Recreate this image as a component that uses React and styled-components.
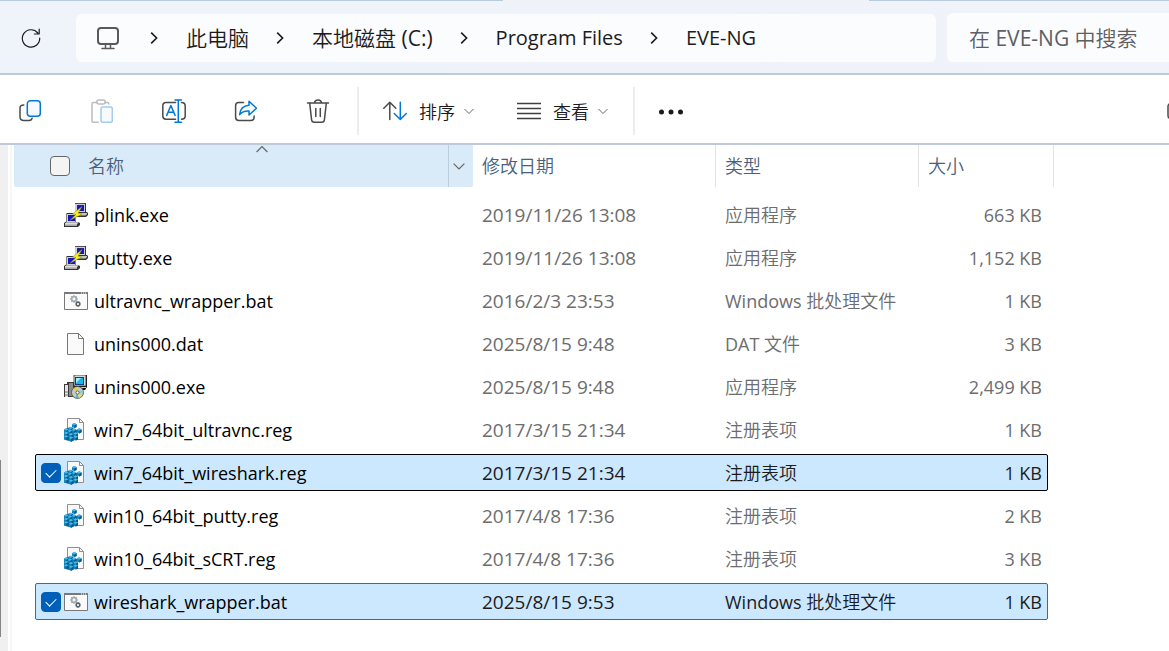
import React from 'react';
import styled, { createGlobalStyle, css } from 'styled-components';

const GlobalStyle = createGlobalStyle`
  * {
    box-sizing: border-box;
  }

  body {
    margin: 0;
    background: #fff;
    color: #1b1b1b;
    font-family: "Open Sans", "Noto Sans CJK SC DemiLight", "Noto Sans CJK SC", sans-serif;
    font-size: 18px;
  }

  button,
  input {
    font: inherit;
    color: inherit;
  }
`;

const Window = styled.div`
  display: flex;
  flex-direction: column;
  min-height: 100vh;
  overflow: hidden;
`;

const TabEdge = styled.div`
  display: flex;
  justify-content: space-between;
  height: 1px;
  background: #eff4f9;
`;

const EdgeLine = styled.div`
  width: ${({ $width }) => $width};
  background: #b9cadb;
`;

const NavBar = styled.header`
  display: flex;
  align-items: flex-end;
  padding: 12px 0 11px 7px;
  background: linear-gradient(90deg, #eef4f9, #f0f3f9);
  border-bottom: 2px solid #bccadb;
`;

const IconButton = styled.button`
  display: flex;
  align-items: center;
  justify-content: center;
  flex: none;
  width: 48px;
  height: 48px;
  padding: 0;
  border: 0;
  background: none;
`;

const AddressBar = styled.nav`
  display: flex;
  align-items: center;
  flex: 1;
  height: 48px;
  margin: 0 11px 0 21px;
  padding-left: 20px;
  border-radius: 6px;
  background: #fbfcfe;
`;

const Crumbs = styled.ol`
  display: flex;
  align-items: center;
  margin: 0 0 0 3px;
  padding: 0;
  list-style: none;
`;

const Crumb = styled.li`
  display: flex;
  align-items: center;
  gap: 28px;
  margin-left: 27px;
  font-size: ${({ $latin }) => ($latin ? 20 : 21)}px;

  a {
    color: #1b1b1b;
    line-height: 28px;
    text-decoration: none;
    white-space: nowrap;
  }
`;

const SearchBox = styled.input`
  width: 222px;
  height: 49px;
  padding: 0 0 0 22px;
  border: 0;
  border-radius: 6px 0 0 6px;
  background: #fbfcfe;
  font-size: 21px;

  &::placeholder {
    color: #5c5f63;
    opacity: 1;
  }
`;

const CommandBar = styled.div`
  display: flex;
  align-items: center;
  height: 70px;
  padding: 4px 0 0 6px;
  border-bottom: 2px solid #bfc9da;
`;

const IconGroup = styled.div`
  display: flex;
  gap: 24px;
`;

const Divider = styled.div`
  width: 2px;
  height: 48px;
  margin: 0 12px 0 ${({ $before }) => $before}px;
  background: #ededed;
`;

const MenuGroup = styled.div`
  display: flex;
  gap: 19px;
`;

const MenuButton = styled.button`
  display: flex;
  align-items: center;
  height: 48px;
  padding: 0 12px;
  border: 0;
  background: none;
  font-weight: 350;
  white-space: nowrap;

  span {
    margin: 0 9px 0 12px;
  }
`;

const PaneButton = styled(IconButton)`
  width: 24px;
  margin: 0 -22px 0 auto;
`;

const Body = styled.main`
  display: flex;
  flex: 1;
`;

const ScrollTrack = styled.div`
  flex: none;
  width: 8px;
  background: #f0f0f0;
`;

const ScrollThumb = styled.div`
  width: 1px;
  height: 177px;
  margin-top: 315px;
  background: #858585;
`;

const Splitter = styled.div`
  flex: none;
  width: 2px;
  margin: 0 2px;
  background: #f7f7f7;
`;

const FileTable = styled.table`
  display: block;
  flex: 1;
`;

const TableHead = styled.thead`
  display: block;
`;

const columns = css`
  display: grid;
  grid-template-columns: ${({ $first, $last }) => `${$first}px 243px 203px ${$last}px`};
`;

const HeadRow = styled.tr`
  ${columns}
  height: 42px;
`;

const HeadCell = styled.th`
  position: relative;
  display: flex;
  align-items: center;
  padding: 0 0 0 9px;
  border-right: 1px solid #e3e3e3;
  color: #4b607c;
  font-weight: 350;
  text-align: left;

  ${({ $active }) => $active && css`
    padding-left: 36px;
    border-right: 0;
    border-radius: 0 0 2px 2px;
    background: #d9ebf9;
  `}
`;

const HeadLabel = styled.span`
  flex: 1;
  padding-bottom: 3px;
  margin-left: ${({ $indent }) => $indent || 0}px;
`;

const SortMark = styled.span`
  position: absolute;
  top: -2px;
  left: 50%;
  display: flex;
  width: 12px;
  margin-left: 12px;
`;

const FilterButton = styled.button`
  display: flex;
  align-items: center;
  justify-content: center;
  width: 25px;
  height: 42px;
  padding: 0 4px 0 0;
  border: 0;
  border-left: 1px solid #b9cfe0;
  background: none;
`;

const Checkbox = styled.input.attrs({ type: 'checkbox' })`
  appearance: none;
  display: flex;
  justify-content: center;
  flex: none;
  width: 20px;
  height: 20px;
  margin: 0;
  border: 1px solid #666;
  border-radius: 4px;
  background: #f4f4f4;

  ${({ $row }) => $row && css`
    opacity: 0;
  `}

  &:checked {
    opacity: 1;
    border-color: #005fb8;
    background: #005fb8;
  }

  &:checked::after {
    content: "";
    width: 9px;
    height: 5px;
    margin-top: 5px;
    border: solid #fff;
    border-width: 0 0 1px 1px;
    transform: rotate(-45deg);
  }
`;

const TableBody = styled.tbody`
  display: flex;
  flex-direction: column;
  gap: 6px;
  padding: 9px 0 31px 21px;
`;

const FileRow = styled.tr`
  ${columns}
  width: 1013px;
  height: 37px;
  border: 1px solid transparent;
  border-radius: 2px;
  color: #6d6d6d;

  ${({ $selected, $focused }) => $selected && css`
    border-color: ${$focused ? '#000' : '#0a78d4'};
    background: #cce8ff;
    color: #1b1b1b;
  `}
`;

const Cell = styled.td`
  display: flex;
  align-items: center;
  justify-content: ${({ $end }) => ($end ? 'flex-end' : 'flex-start')};
  padding: ${({ $end }) => ($end ? '0 5px 0 0' : '0 0 0 9px')};
  font-size: ${({ $date }) => ($date ? 19 : 18)}px;
  line-height: 24px;
  white-space: nowrap;
`;

const NameCell = styled(Cell)`
  gap: 3px;
  padding: 0 0 0 5px;
  color: #000;

  label {
    display: flex;
    align-items: center;
    gap: 6px;
  }
`;

const Line = ({ size = 24, w = 1.5, color = '#4a4a4a', children, ...rest }) => (
  <svg
    width={size}
    height={size}
    viewBox={`0 0 ${size} ${size}`}
    fill="none"
    stroke={color}
    strokeWidth={w}
    strokeLinecap="round"
    strokeLinejoin="round"
    aria-hidden="true"
    {...rest}
  >
    {children}
  </svg>
);

const RefreshIcon = () => (
  <Line color="#1b1b1b" w={1.2}>
    <path d="M18.800 7A8.700 8.700 0 1 0 20.700 12M20.200 3.200v4.800h-4.800" />
  </Line>
);

const ComputerIcon = () => (
  <Line color="#5a5a5a" w={2}>
    <rect x="2" y="2" width="20" height="16" rx="3" />
    <path d="M9.500 18.500v3M14.500 18.500v3M6 22.500h12" strokeWidth="1.500" />
  </Line>
);

const CrumbArrow = () => (
  <svg width="8" height="14" viewBox="0 0 8 14" fill="none" stroke="#1b1b1b" strokeWidth="1.600" aria-hidden="true">
    <path d="M1.200 1.600 6.600 7l-5.400 5.400" />
  </svg>
);

const CopyIcon = () => (
  <Line>
    <path d="M5.800 6C3 6 2 7.300 2 9v8.500C2 20.200 3.600 21.500 5.800 21.500H11c1.500 0 2.800-.8 3.100-2.300" />
    <rect x="9.300" y="1.800" width="13" height="15.400" rx="3" stroke="#0078d4" fill="#f5faff" />
  </Line>
);

const PasteIcon = () => (
  <Line color="#bdbdbd">
    <path d="M7 3.500H3.500C2.500 3.500 2 4 2 5v17c0 .9.500 1.300 1.300 1.300H8M15 3.500h2.500c.8 0 1.300.5 1.300 1.500" />
    <rect x="6.800" y="1" width="8.400" height="4" rx="2" />
    <rect x="11" y="8" width="11.300" height="15.300" rx="1.800" stroke="#a3cbed" fill="#f7fbff" />
  </Line>
);

const RenameIcon = () => (
  <Line>
    <path d="M13.500 3.600H4C1.700 3.600 .8 5 .8 7v10c0 2 .9 3.200 3.200 3.200h9.500M19.500 3.600c2.500 0 3.700 1.200 3.700 3.400v10c0 2-1.200 3.200-3.700 3.200" />
    <path d="M13 .9h6.500M13 23.300h6.500M16.300 .9v22.400" stroke="#0078d4" />
    <path d="m4.700 16.400 4.200-9.900 4.200 9.900M6 13.300h5.800" stroke="#0078d4" />
  </Line>
);

const ShareIcon = () => (
  <Line>
    <path d="M9.500 3.500H4.700C2.500 3.500 1.600 4.800 1.600 6.700v11.600c0 2.100 1.100 3.200 3.200 3.200h12c2.200 0 3.300-1.100 3.300-3.200v-1.200" />
    <path d="M15 2.300 22.500 9.200 15 16v-4c-4.300-.2-7 .8-9.400 3.600.5-5.400 3.800-9 9.400-9.400z" stroke="#0078d4" fill="#f5faff" />
  </Line>
);

const DeleteIcon = () => (
  <Line>
    <path d="M1.500 4h21M8.500 3.700c.3-1.800 1.500-2.800 3.500-2.800s3.200 1 3.500 2.800M3.700 4.200l1.900 16.600c.2 1.600 1 2.400 2.600 2.400h7.600c1.600 0 2.400-.8 2.600-2.400L20.300 4.200M9.800 9.500v8M14.300 9.500v8" />
  </Line>
);

const SortIcon = () => (
  <Line>
    <path d="M6.800 20.500V3.300M.8 9.300l6-6 6 6" />
    <path d="M17.300 3.300v17.200M11.300 14.500l6 6 6-6" stroke="#0078d4" />
  </Line>
);

const ListIcon = () => (
  <Line w={1.4} color="#3f3f3f" strokeLinecap="butt">
    <path d="M0 4.500h24M0 9.500h24M0 14.500h24M0 19.500h24" />
  </Line>
);

const DotsIcon = () => (
  <svg width="24" height="24" viewBox="0 0 24 24" fill="#1b1b1b" aria-hidden="true">
    <circle cx="2.500" cy="13" r="2.500" />
    <circle cx="12" cy="13" r="2.500" />
    <circle cx="21.500" cy="13" r="2.500" />
  </svg>
);

const PaneIcon = () => (
  <Line>
    <rect x="1" y="4.500" width="22" height="15" rx="3" />
    <path d="M15 5v14" />
  </Line>
);

const Chevron = ({ size = 10, up, color = '#666' }) => (
  <svg width={size} height={size} viewBox="0 0 10 10" fill="none" stroke={color} aria-hidden="true">
    <path d={up ? 'M.5 7.500 5 3l4.500 4.500' : 'M.5 3 5 7.500 9.500 3'} />
  </svg>
);

// Two linked terminals
const PuttyIcon = () => (
  <svg width="24" height="24" viewBox="0 0 24 24" aria-hidden="true">
    <path d="M11 0h11v9h1l1 1v2l-2 2H12v-3h-1z" fill="#333" />
    <path d="M11 .8h10V9H11z" fill="#d0d0d0" />
    <path d="M13 2h7v6h-7z" fill="#333" />
    <path d="M13.500 2.500H20V8h-6.500z" fill="#1414c4" />
    <path d="M12.500 10H23v1l-1.500 1.500h-9z" fill="#c4c4c4" />
    <path d="M3 10h9v9h2l2 1v2l-2 2H0v-4l2-1.500V11z" fill="#333" />
    <path d="M2.500 11h9v8h-9z" fill="#d0d0d0" />
    <path d="M4 12h7v6H4z" fill="#1414c4" />
    <path d="M1 20.300l1.500-1H14.500l-1.500 2v1.500H1z" fill="#dcdcdc" />
    <path d="M1 21.500h12v1.300H1z" fill="#a5a5a5" />
    <path d="M18 3.500 8.500 11l3.500.5L6 17.300l12-6.300-4-.8z" fill="#f8f01c" stroke="#8a8414" strokeWidth=".5" />
  </svg>
);

const Gear = ({ x, y, s, color }) => (
  <g transform={`translate(${x} ${y}) scale(${s})`}>
    <circle r="2.700" fill="none" stroke={color} strokeWidth="2" />
    <path
      d="M0-4.500v1.500M0 3v1.500M-4.500 0H-3M3 0h1.500M-3.200-3.200l1 1M2.200 2.200l1 1M3.200-3.200l-1 1M-2.200 2.200l-1 1"
      stroke={color}
      strokeWidth="1.700"
    />
  </g>
);

const BatchIcon = () => (
  <svg width="24" height="24" viewBox="0 0 24 24" aria-hidden="true">
    <path d="M.5 3.500h23v17H.5z" fill="#fafafa" stroke="#797979" />
    <path d="M0 3h24v2H0z" fill="#797979" />
    <path d="M17 4h1M19 4h1M21 4h1" stroke="#fff" />
    <Gear x="10" y="10" s=".85" color="#a3abb5" />
    <Gear x="14" y="15" s=".65" color="#59636b" />
  </svg>
);

const DocumentIcon = () => (
  <svg width="24" height="24" viewBox="0 0 24 24" aria-hidden="true">
    <path d="M3.500 1.500h11l5 5v16h-16z" fill="#fafafa" stroke="#797979" />
    <path d="M14.500 1.500v5h5" fill="none" stroke="#797979" />
  </svg>
);

const SetupIcon = () => (
  <svg width="24" height="24" viewBox="0 0 24 24" aria-hidden="true">
    <path d="M10 0h13v12l-2 3h-8l-3-3z" fill="#111" />
    <path d="M10 0h12v11H10z" fill="#d8d8d0" stroke="#333" strokeWidth=".8" />
    <path d="M11 2h9v8h-9z" fill="#08427c" />
    <path d="M12 3h7v6h-7z" fill="#1ab6ea" />
    <path d="M12 8V3h5z" fill="#9df0fb" />
    <path d="M14 12h8v1h-8z" fill="#c8c8c8" />
    <path d="M0 9h3V7h7v15H0z" fill="#3b3b3b" />
    <path d="M1 10h3v12H1z" fill="#e4e4e4" />
    <path d="M5 8h4v13H5z" fill="#8b8b8b" />
    <path d="M1 17h3M1 20h3" stroke="#777" />
    <circle cx="13.500" cy="17.500" r="6" fill="#c6cbc9" stroke="#4a4a4a" strokeWidth=".8" />
    <path d="m13.500 17.500-4-4A6 6 0 0 1 13 12z" fill="#d7d23f" />
    <path d="m13.500 17.500 5-2.500a6 6 0 0 1 .5 3.500z" fill="#7fd2c0" />
    <path d="m13.500 17.500.8 5.500a6 6 0 0 1-3-.5z" fill="#3fc0c0" />
    <path d="m13.500 17.500 3.800 4a6 6 0 0 1-2 1.300z" fill="#efe04a" />
    <circle cx="13.500" cy="17.500" r="1.600" fill="#fff" stroke="#444" strokeWidth=".8" />
  </svg>
);

const Cube = ({ x, y }) => (
  <g transform={`translate(${x} ${y})`}>
    <path d="M0 1.200 2.300 0l2.300 1.200v2.700L2.300 5.100 0 3.900z" fill="#0f86c0" />
    <path d="M0 1.200 2.300 0l2.300 1.200-2.300 1.200z" fill="#4fb9e2" />
    <path d="M2.300 2.400 4.600 1.200v2.700L2.300 5.100z" fill="#09588a" />
  </g>
);

const cubes = [
  [4.600, 8.700], [0, 10.300], [7.800, 10.600], [3.600, 11.600],
  [0, 13.800], [9.400, 14.300], [4.800, 15], [0, 17.200], [9.400, 17.500], [4.800, 18.600],
  [8, 5], [13, 10.300],
];

const RegistryIcon = () => (
  <svg width="24" height="24" viewBox="0 0 24 24" aria-hidden="true">
    <path d="M3.500.5h12l4 4v17h-16z" fill="#f8f8f8" stroke="#8f8f8f" />
    <path d="M15.500.5v4h4" fill="none" stroke="#8f8f8f" />
    <path d="M0 12l5-2.500 8.500 3V21L7 23.500l-7-2z" fill="#0a6496" />
    {cubes.map(([x, y]) => (
      <Cube key={`${x}-${y}`} x={x} y={y} />
    ))}
  </svg>
);

const icons = {
  putty: PuttyIcon,
  batch: BatchIcon,
  document: DocumentIcon,
  setup: SetupIcon,
  registry: RegistryIcon,
};

const path = [
  { label: '此电脑' },
  { label: '本地磁盘 (C:)' },
  { label: 'Program Files', latin: true },
  { label: 'EVE-NG', latin: true },
];

const files = [
  { name: 'plink.exe', date: '2019/11/26 13:08', type: '应用程序', size: '663 KB', icon: 'putty' },
  { name: 'putty.exe', date: '2019/11/26 13:08', type: '应用程序', size: '1,152 KB', icon: 'putty' },
  { name: 'ultravnc_wrapper.bat', date: '2016/2/3 23:53', type: 'Windows 批处理文件', size: '1 KB', icon: 'batch' },
  { name: 'unins000.dat', date: '2025/8/15 9:48', type: 'DAT 文件', size: '3 KB', icon: 'document' },
  { name: 'unins000.exe', date: '2025/8/15 9:48', type: '应用程序', size: '2,499 KB', icon: 'setup' },
  { name: 'win7_64bit_ultravnc.reg', date: '2017/3/15 21:34', type: '注册表项', size: '1 KB', icon: 'registry' },
  { name: 'win7_64bit_wireshark.reg', date: '2017/3/15 21:34', type: '注册表项', size: '1 KB', icon: 'registry', selected: true, focused: true },
  { name: 'win10_64bit_putty.reg', date: '2017/4/8 17:36', type: '注册表项', size: '2 KB', icon: 'registry' },
  { name: 'win10_64bit_sCRT.reg', date: '2017/4/8 17:36', type: '注册表项', size: '3 KB', icon: 'registry' },
  { name: 'wireshark_wrapper.bat', date: '2025/8/15 9:53', type: 'Windows 批处理文件', size: '1 KB', icon: 'batch', selected: true },
];

const File = ({ file }) => {
  const Icon = icons[file.icon];
  return (
    <FileRow $first={437} $last={128} $selected={file.selected} $focused={file.focused}>
      <NameCell>
        <Checkbox id={file.name} $row defaultChecked={file.selected} />
        <label htmlFor={file.name}>
          <Icon />
          {file.name}
        </label>
      </NameCell>
      <Cell $date>{file.date}</Cell>
      <Cell>{file.type}</Cell>
      <Cell $end>{file.size}</Cell>
    </FileRow>
  );
};

const App = () => (
  <>
    <GlobalStyle />
    <Window>
      <TabEdge>
        <EdgeLine $width="43%" />
        <EdgeLine $width="25.700%" />
      </TabEdge>
      <NavBar>
        <IconButton type="button" aria-label="刷新">
          <RefreshIcon />
        </IconButton>
        <AddressBar>
          <ComputerIcon />
          <Crumbs>
            {path.map(({ label, latin }) => (
              <Crumb key={label} $latin={latin}>
                <CrumbArrow />
                <a href="#path">{label}</a>
              </Crumb>
            ))}
          </Crumbs>
        </AddressBar>
        <SearchBox type="text" aria-label="搜索" placeholder="在 EVE-NG 中搜索" />
      </NavBar>

      <CommandBar>
        <IconGroup>
          <IconButton type="button" aria-label="复制"><CopyIcon /></IconButton>
          <IconButton type="button" aria-label="粘贴" disabled><PasteIcon /></IconButton>
          <IconButton type="button" aria-label="重命名"><RenameIcon /></IconButton>
          <IconButton type="button" aria-label="共享"><ShareIcon /></IconButton>
          <IconButton type="button" aria-label="删除"><DeleteIcon /></IconButton>
        </IconGroup>
        <Divider $before={15} />
        <MenuGroup>
          <MenuButton type="button">
            <SortIcon />
            <span>排序</span>
            <Chevron />
          </MenuButton>
          <MenuButton type="button">
            <ListIcon />
            <span>查看</span>
            <Chevron />
          </MenuButton>
        </MenuGroup>
        <Divider $before={13} />
        <IconButton type="button" aria-label="更多"><DotsIcon /></IconButton>
        <PaneButton type="button" aria-label="详细信息"><PaneIcon /></PaneButton>
      </CommandBar>

      <Body>
        <ScrollTrack>
          <ScrollThumb />
        </ScrollTrack>
        <Splitter />
        <FileTable>
          <TableHead>
            <HeadRow $first={459} $last={135}>
              <HeadCell $active>
                <Checkbox aria-label="全选" />
                <HeadLabel $indent={18}>名称</HeadLabel>
                <SortMark><Chevron size={12} up /></SortMark>
                <FilterButton type="button" aria-label="筛选"><Chevron size={12} /></FilterButton>
              </HeadCell>
              <HeadCell><HeadLabel>修改日期</HeadLabel></HeadCell>
              <HeadCell><HeadLabel>类型</HeadLabel></HeadCell>
              <HeadCell><HeadLabel>大小</HeadLabel></HeadCell>
            </HeadRow>
          </TableHead>
          <TableBody>
            {files.map((file) => (
              <File key={file.name} file={file} />
            ))}
          </TableBody>
        </FileTable>
      </Body>
    </Window>
  </>
);

export default App;
